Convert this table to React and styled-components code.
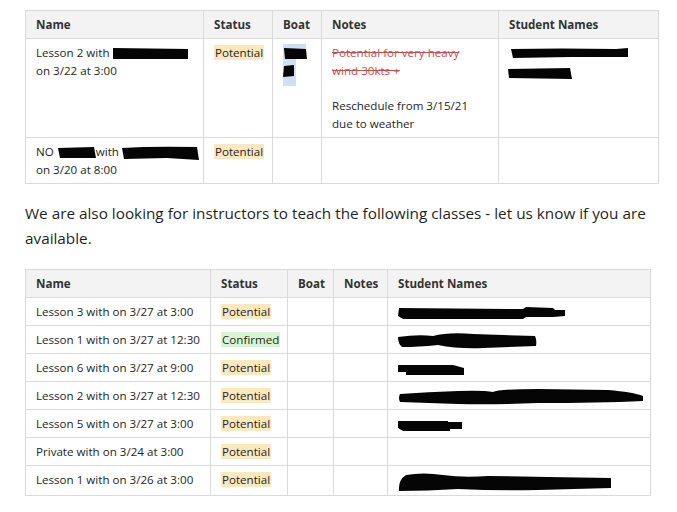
import React from 'react';
import styled, { createGlobalStyle } from 'styled-components';

const GlobalStyle = createGlobalStyle`
  body {
    margin: 0;
    background: #ffffff;
    font-family: "Open Sans", "Noto Sans", sans-serif;
    color: #262626;
  }
`;

const Page = styled.div`
  padding: 10px 0 0 25px;
  width: 640px;
`;

const Table = styled.table`
  border-collapse: collapse;
  table-layout: fixed;
  width: ${p => p.$width}px;
  font-size: 11.6px;
  line-height: 18px;
`;

const Th = styled.th`
  text-align: left;
  font-weight: 700;
  color: #333;
  background: #f3f3f3;
  border: 1px solid #dadada;
  padding: 5px 10px 4px;
`;

const Td = styled.td`
  vertical-align: top;
  border: 1px solid #dadada;
  padding: ${p => (p.$compact ? '5px 10px 4px' : '5px 10px 4px')};
`;

const NoWrap = styled.span`
  white-space: nowrap;
`;

const Tag = styled.span`
  padding: 0 1px;
  background: ${p => (p.$tone === 'green' ? '#d8f5d2' : '#fce8bf')};
`;

const Struck = styled.div`
  width: 145px;
  color: #c0504d;
  text-decoration: line-through;
`;

const Note = styled.div`
  width: 145px;
  margin-top: ${p => p.$gap || 0}px;
`;

const Para = styled.p`
  margin: 17px 0 18px;
  font-size: 15.3px;
  line-height: 25px;
  color: #1f1f1f;
`;

const Scribble = styled.svg`
  display: ${p => (p.$block ? 'block' : 'inline-block')};
  vertical-align: middle;
  margin: ${p => p.$m || '0'};
`;

// a black redaction stroke
const Mark = ({ w, h, d, block, m }) => (
  <Scribble width={w} height={h} viewBox={`0 0 ${w} ${h}`} $block={block} $m={m}>
    <path d={d} fill="#050505" />
  </Scribble>
);

const BoatMark = () => (
  <Scribble width={25} height={42} viewBox="0 0 25 42" $block>
    <path d="M0,0 H23 V14 H13 V42 H0 Z" fill="#cfe0f4" />
    <path d="M1,4 L23,5 L24,15 L2,15 Z" fill="#050505" />
    <path d="M1,22 L11,21 L11,32 L0,33 Z" fill="#050505" />
  </Scribble>
);

const first = [
  { w: 178, h: 'Name' },
  { w: 69, h: 'Status' },
  { w: 49, h: 'Boat' },
  { w: 177, h: 'Notes' },
  { w: 160, h: 'Student Names' },
];

const second = [
  { w: 185, h: 'Name' },
  { w: 77, h: 'Status' },
  { w: 46, h: 'Boat' },
  { w: 54, h: 'Notes' },
  { w: 263, h: 'Student Names' },
];

const classes = [
  {
    name: 'Lesson 3 with on 3/27 at 3:00',
    status: 'Potential',
    mark: { w: 167, h: 12, d: 'M1,1 L125,2 L128,0 L155,1 L157,3 L167,3 L167,9 L155,10 L128,10 L125,12 L5,12 L0,9 Z' },
  },
  {
    name: 'Lesson 1 with on 3/27 at 12:30',
    status: 'Confirmed',
    mark: { w: 139, h: 17, d: 'M0,5 Q20,2 35,4 Q50,0 75,2 L137,4 Q139,8 138,14 L85,16 Q60,17 40,13 Q20,15 4,15 Q0,12 0,5 Z' },
  },
  {
    name: 'Lesson 6 with on 3/27 at 9:00',
    status: 'Potential',
    mark: { w: 66, h: 11, d: 'M0,1 L55,1 L66,4 L66,11 L8,11 L8,8 L0,8 Z' },
  },
  {
    name: 'Lesson 2 with on 3/27 at 12:30',
    status: 'Potential',
    mark: { w: 245, h: 16, d: 'M2,5 Q30,3 60,2 Q85,1 95,3 Q100,0 140,0 L210,1 Q235,3 245,7 L245,12 Q200,14 140,14 Q90,16 60,15 Q30,14 2,13 Q0,9 2,5 Z' },
  },
  {
    name: 'Lesson 5 with on 3/27 at 3:00',
    status: 'Potential',
    mark: { w: 64, h: 11, d: 'M0,1 L50,1 L50,2 L64,2 L64,9 L52,9 L52,11 L5,11 L0,8 Z' },
  },
  { name: 'Private with on 3/24 at 3:00', status: 'Potential' },
  {
    name: 'Lesson 1 with on 3/26 at 3:00',
    status: 'Potential',
    mark: { w: 213, h: 19, d: 'M1,19 Q0,8 8,3 Q25,0 45,3 Q65,6 90,4 L150,5 L213,6 L213,16 L140,18 Q100,19 60,17 Q30,19 1,19 Z' },
  },
];

const Head = ({ cols }) => (
  <>
    <colgroup>
      {cols.map(c => (
        <col key={c.h} style={{ width: c.w }} />
      ))}
    </colgroup>
    <thead>
      <tr>
        {cols.map(c => (
          <Th key={c.h}>{c.h}</Th>
        ))}
      </tr>
    </thead>
  </>
);

const App = () => {
  return (
    <Page>
      <GlobalStyle />
      <Table $width={633}>
        <Head cols={first} />
        <tbody>
          <tr>
            <Td>
              <NoWrap>
                Lesson 2 with{' '}
                <Mark w={75} h={11} d="M0,0 L75,1 L75,11 L0,11 Z" />
              </NoWrap>{' '}
              on 3/22 at 3:00
            </Td>
            <Td>
              <Tag>Potential</Tag>
            </Td>
            <Td>
              <BoatMark />
            </Td>
            <Td>
              <Struck>Potential for very heavy wind 30kts +</Struck>
              <Note $gap={17}>Reschedule from 3/15/21 due to weather</Note>
            </Td>
            <Td>
              <Mark w={117} h={10} d="M0,1 Q50,0 105,1 L117,0 L117,9 L60,9 L2,10 Z" block m="4px 0 0 2px" />
              <Mark w={64} h={11} d="M0,1 L62,0 L64,11 L1,10 Z" block m="10px 0 0 -1px" />
            </Td>
          </tr>
          <tr>
            <Td>
              <NoWrap>
                NO <Mark w={38} h={11} d="M0,1 L36,0 L38,11 L2,11 Z" m="0 0 0 1px" />
                with <Mark w={77} h={14} d="M0,2 Q30,0 75,1 L77,14 L45,12 L2,13 Z" />
              </NoWrap>{' '}
              on 3/20 at 8:00
            </Td>
            <Td>
              <Tag>Potential</Tag>
            </Td>
            <Td />
            <Td />
            <Td />
          </tr>
        </tbody>
      </Table>

      <Para>
        We are also looking for instructors to teach the following classes - let us know if you are
        available.
      </Para>

      <Table $width={625}>
        <Head cols={second} />
        <tbody>
          {classes.map(c => (
            <tr key={c.name}>
              <Td $compact>{c.name}</Td>
              <Td $compact>
                <Tag $tone={c.status === 'Confirmed' ? 'green' : 'yellow'}>{c.status}</Tag>
              </Td>
              <Td $compact />
              <Td $compact />
              <Td $compact>{c.mark && <Mark {...c.mark} />}</Td>
            </tr>
          ))}
        </tbody>
      </Table>
    </Page>
  );
};

export default App;
